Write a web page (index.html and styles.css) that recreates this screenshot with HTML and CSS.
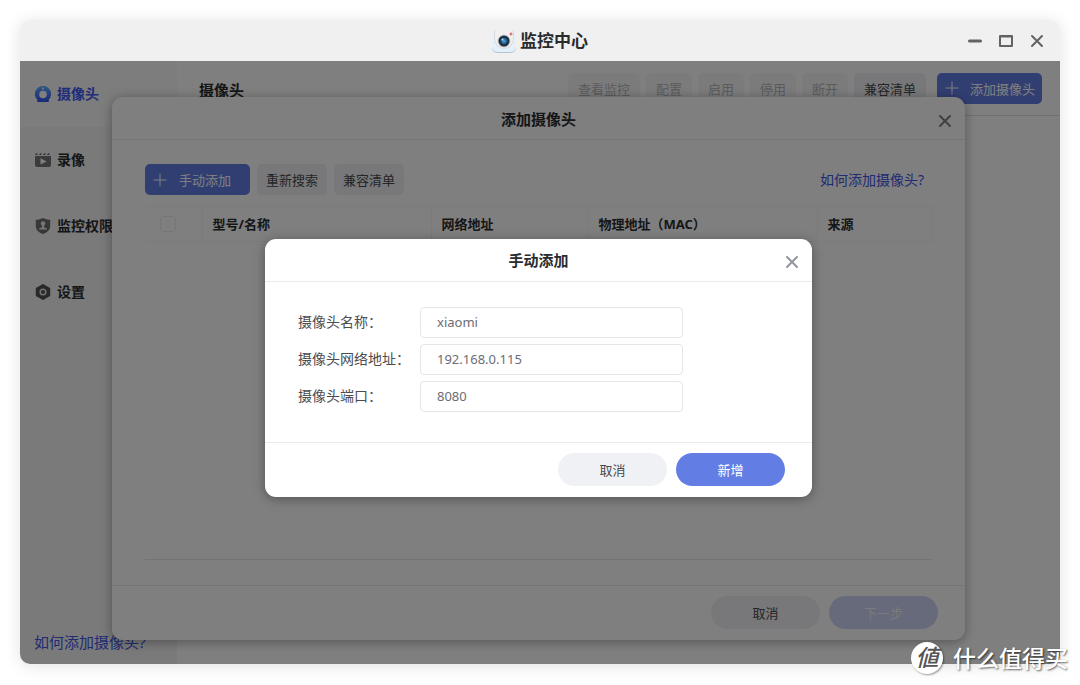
FILE: index.html
```html
<!DOCTYPE html>
<html lang="zh-CN">
<head>
<meta charset="utf-8">
<title>监控中心</title>
<link rel="stylesheet" href="styles.css">
</head>
<body>
<div class="window">
  <header class="titlebar">
    <div class="app-title">
      <svg class="app-icon" viewBox="0 0 24 24" aria-hidden="true">
        <defs>
          <linearGradient id="shell" x1="0" y1="0" x2="0" y2="1"><stop offset="0" stop-color="#f1f2f4"/><stop offset="1" stop-color="#e0effd"/></linearGradient>
          <radialGradient id="lens"><stop offset="0" stop-color="#5aa9dc"/><stop offset=".5" stop-color="#2368a3"/><stop offset="1" stop-color="#17202b"/></radialGradient>
        </defs>
        <rect x="0" y="2" width="24" height="22" rx="5" fill="#bcc2c9"/>
        <rect x="0" y="0" width="24" height="23" rx="5" fill="url(#shell)"/>
        <path d="M2 1h20v9a10 10 0 0 1-20 0z" fill="#d9dbdf"/>
        <path d="M3 1h18v9a9 9 0 0 1-18 0z" fill="#f0f0f1"/>
        <circle cx="12" cy="12" r="6.5" fill="#c9ccd1"/>
        <circle cx="12" cy="12" r="5.500" fill="#26313d"/>
        <circle cx="12" cy="12" r="4.500" fill="url(#lens)"/>
        <circle cx="10.500" cy="10.500" r="1" fill="#b7def5"/>
        <path d="M19 3.500v3M17.500 5h3" stroke="#e5494d" stroke-width="1"/>
      </svg>
      <h1 class="app-name">监控中心</h1>
    </div>
    <div class="window-controls">
      <button class="icon-button" type="button" aria-label="最小化"><svg viewBox="0 0 14 14"><path d="M1.500 7h11" stroke="#636363" stroke-width="3" stroke-linecap="round"/></svg></button>
      <button class="icon-button" type="button" aria-label="最大化"><svg viewBox="0 0 14 14"><path d="M1 2h12v10H1z" fill="none" stroke="#636363" stroke-width="2" stroke-linejoin="round"/><path d="M1 2.500h12" stroke="#636363" stroke-width="2"/></svg></button>
      <button class="icon-button" type="button" aria-label="关闭"><svg viewBox="0 0 14 14"><path d="M2 2l10 10M12 2L2 12" stroke="#636363" stroke-width="2" stroke-linecap="round"/></svg></button>
    </div>
  </header>

  <div class="workspace">
    <aside class="sidebar">
      <nav class="menu">
        <a class="menu-item menu-item-active" href="#cameras">
          <svg class="menu-icon" viewBox="0 0 16 16" aria-hidden="true"><defs><linearGradient id="cam" x1="0" y1="0" x2="0" y2="1"><stop offset="0" stop-color="#62b0ff"/><stop offset="1" stop-color="#3154ef"/></linearGradient></defs><path d="M8 0a8 8 0 0 1 5.800 13.500V16H2.200v-2.500A8 8 0 0 1 8 0z" fill="url(#cam)"/><circle cx="8" cy="8.500" r="3.800" fill="#fff"/><circle cx="8" cy="2.500" r="1" fill="#fff"/></svg>
          <span>摄像头</span>
        </a>
        <a class="menu-item" href="#recordings">
          <svg class="menu-icon" viewBox="0 0 16 16" aria-hidden="true"><path d="M0 3l1-1.500h2L2 3zM4 3l1-1.500h2L6 3zM8 3l1-1.500h2L10 3zM12 3l1-1.500h2L14 3z" fill="#5d5d5f"/><path d="M0 4h16v9a2 2 0 0 1-2 2H2a2 2 0 0 1-2-2z" fill="#77777a"/><path d="M5.500 6.200v6.400L11.500 9.400z" fill="#fff"/></svg>
          <span>录像</span>
        </a>
        <a class="menu-item" href="#permissions">
          <svg class="menu-icon" viewBox="0 0 16 16" aria-hidden="true"><path d="M8 0c2.500 1.200 4.600 1.700 7.200 1.800V8c0 4-3.200 6.800-7.200 8-4-1.200-7.200-4-7.200-8V1.800C3.400 1.700 5.500 1.200 8 0z" fill="#707073"/><circle cx="8" cy="5.500" r="2.200" fill="#eee"/><path d="M7 7h2v2.500c1.800.2 3 .8 3 2H4c0-1.200 1.200-1.800 3-2z" fill="#eee"/></svg>
          <span>监控权限</span>
        </a>
        <a class="menu-item" href="#settings">
          <svg class="menu-icon" viewBox="0 0 16 16" aria-hidden="true"><path d="M8 1l6.200 3.600v6.800L8 15l-6.200-3.600V4.600z" fill="#525255" stroke="#525255" stroke-width="2" stroke-linejoin="round"/><circle cx="8" cy="8" r="2.800" fill="none" stroke="#e4e4e4" stroke-width="1.500"/></svg>
          <span>设置</span>
        </a>
      </nav>
      <a class="help-link sidebar-help" href="#help">如何添加摄像头?</a>
    </aside>

    <main class="main">
      <div class="toolbar">
        <h2 class="page-title">摄像头</h2>
        <div class="button-row">
          <button class="button" type="button" disabled>查看监控</button>
          <button class="button" type="button" disabled>配置</button>
          <button class="button" type="button" disabled>启用</button>
          <button class="button" type="button" disabled>停用</button>
          <button class="button" type="button" disabled>断开</button>
          <button class="button" type="button">兼容清单</button>
        </div>
        <button class="button button-add" type="button"><svg class="plus" viewBox="0 0 14 14" aria-hidden="true"><path d="M7 1v12M1 7h12" stroke="#fff" stroke-width="1" stroke-linecap="round"/></svg><span class="add-label">添加摄像头</span></button>
      </div>
    </main>

    <section class="dialog search-dialog" role="dialog" aria-labelledby="search-title">
      <header class="dialog-header">
        <h2 class="dialog-title" id="search-title">添加摄像头</h2>
        <button class="icon-button dialog-close" type="button" aria-label="关闭"><svg viewBox="0 0 14 14"><path d="M2 2l10 10M12 2L2 12" stroke="#808389" stroke-width="2" stroke-linecap="round"/></svg></button>
      </header>
      <div class="search-body">
        <div class="search-tools">
          <button class="button button-add" type="button"><svg class="plus" viewBox="0 0 14 14" aria-hidden="true"><path d="M7 1v12M1 7h12" stroke="#fff" stroke-width="1" stroke-linecap="round"/></svg><span class="add-label">手动添加</span></button>
          <button class="button button-compact" type="button">重新搜索</button>
          <button class="button button-compact" type="button">兼容清单</button>
          <a class="help-link search-help" href="#help">如何添加摄像头?</a>
        </div>
        <div class="results">
          <table class="results-table">
            <colgroup><col class="col-check"><col class="col-name"><col class="col-address"><col class="col-mac"><col class="col-source"></colgroup>
            <thead>
              <tr>
                <th class="check-cell"><input class="check" type="checkbox" aria-label="全选"></th>
                <th>型号/名称</th>
                <th>网络地址</th>
                <th>物理地址（MAC）</th>
                <th>来源</th>
              </tr>
            </thead>
          </table>
        </div>
      </div>
      <footer class="dialog-footer">
        <button class="pill" type="button">取消</button>
        <button class="pill pill-primary" type="button" disabled>下一步</button>
      </footer>
    </section>

    <div class="backdrop">
      <form class="dialog manual-dialog" role="dialog" aria-labelledby="manual-title">
        <header class="dialog-header">
          <h2 class="dialog-title" id="manual-title">手动添加</h2>
          <button class="icon-button dialog-close" type="button" aria-label="关闭"><svg viewBox="0 0 14 14"><path d="M2 2l10 10M12 2L2 12" stroke="#92959d" stroke-width="2" stroke-linecap="round"/></svg></button>
        </header>
        <div class="fields">
          <label class="field-label" for="name">摄像头名称：</label>
          <input class="field" id="name" type="text" value="xiaomi">
          <label class="field-label" for="address">摄像头网络地址：</label>
          <input class="field" id="address" type="text" value="192.168.0.115">
          <label class="field-label" for="port">摄像头端口：</label>
          <input class="field" id="port" type="text" value="8080">
        </div>
        <footer class="dialog-footer">
          <button class="pill" type="button">取消</button>
          <button class="pill pill-primary" type="submit">新增</button>
        </footer>
      </form>
    </div>
  </div>
</div>
<div class="watermark"><span class="watermark-logo">値</span><span>什么值得买</span></div>
</body>
</html>
```
FILE: styles.css
```css
* { box-sizing: border-box; }

body {
  margin: 0;
  height: 100vh;
  padding: 20px 20px 21px;
  overflow: hidden;
  position: relative;
  background: #fff;
  color: #2b2c2e;
  font: 14px/20px "Noto Sans", "Noto Sans CJK SC", sans-serif;
}

h1, h2 { margin: 0; font-weight: 700; }
a { color: inherit; text-decoration: none; }
button, input { font-family: inherit; margin: 0; }
button { border: 0; white-space: nowrap; }

.window {
  height: 100%;
  display: flex;
  flex-direction: column;
  border-radius: 10px;
  overflow: hidden;
  box-shadow: 0 2px 16px rgba(0, 0, 0, .12);
}

.titlebar {
  height: 41px;
  flex: none;
  display: grid;
  grid-template-columns: 1fr auto 1fr;
  align-items: center;
  padding: 0 16px;
  background: #f0f0f0;
}
.app-title { grid-column: 2; display: flex; align-items: center; gap: 4px; }
.app-icon { width: 24px; height: 24px; }
.app-name { font-size: 17px; line-height: 24px; }
.window-controls { display: flex; justify-content: flex-end; gap: 17px; }

.icon-button { width: 14px; height: 14px; padding: 0; background: none; }
.icon-button svg { display: block; width: 14px; height: 14px; }

.workspace { flex: 1; min-height: 0; display: flex; position: relative; background: #fff; }

.sidebar {
  width: 157px;
  flex: none;
  display: flex;
  flex-direction: column;
  justify-content: space-between;
  background: #f4f4f4;
}
.menu-item {
  height: 66px;
  display: flex;
  align-items: center;
  gap: 6px;
  padding-left: 15px;
  font-weight: 700;
}
.menu-item-active { background: #fafafa; color: #4156f2; }
.menu-icon { width: 16px; height: 16px; }
.help-link { color: #4156e8; }
.sidebar-help { padding: 0 0 12px 14px; font-size: 15px; }

.main { flex: 1; min-width: 0; }
.toolbar {
  height: 55px;
  display: flex;
  align-items: center;
  gap: 11px;
  padding: 0 18px 0 22px;
  border-bottom: 1px solid #e2e2e4;
}
.page-title { flex: 1; font-size: 15px; padding-top: 4px; }
.button-row { display: flex; gap: 6px; }

.button {
  height: 31px;
  padding: 0 10px;
  border-radius: 5px;
  background: #f0f1f5;
  color: #4a4a4c;
  font-size: 13px;
}
.button:disabled { background: #f7f7f9; color: #b7b8bb; }
.button-compact { padding: 0 9px; }
.button-add {
  width: 105px;
  display: flex;
  align-items: center;
  padding: 0 7px 0 8px;
  background: #627de3;
  color: #fff;
}
.plus { width: 14px; height: 14px; flex: none; }
.add-label { flex: 1; text-align: center; }
.toolbar .button-add .add-label { text-align: right; }

.dialog {
  display: flex;
  flex-direction: column;
  border-radius: 11px;
  background: #fff;
  box-shadow: 0 2px 12px rgba(0, 0, 0, .35);
}
.dialog-header {
  height: 43px;
  flex: none;
  display: grid;
  grid-template-columns: 1fr auto 1fr;
  align-items: center;
  padding: 1px 13px 0;
  border-bottom: 1px solid #e9eaec;
}
.dialog-title { grid-column: 2; font-size: 15px; }
.dialog-close { justify-self: end; margin-top: 4px; }
.dialog-footer {
  height: 55px;
  flex: none;
  display: flex;
  justify-content: flex-end;
  align-items: center;
  gap: 9px;
  padding: 0 27px 1px 26px;
  border-top: 1px solid #e9eaec;
}
.pill {
  width: 109px;
  height: 33px;
  border-radius: 17px;
  background: #f0f1f5;
  color: #4a4a4c;
  font-size: 13px;
}
.pill-primary { background: #627de3; color: #fff; }
.pill-primary:disabled { background: #cfd5f5; color: #f4f4f6; }

.search-dialog { position: absolute; inset: 36px 95px 24px 92px; }
.search-body { flex: 1; display: flex; flex-direction: column; padding: 24px 33px 25px; }
.search-tools { display: flex; align-items: center; gap: 7px; }
.search-help { margin-left: auto; padding-right: 8px; }
.results { flex: 1; margin-top: 11px; border-bottom: 1px solid #e3e6ef; }
.results-table { width: 100%; table-layout: fixed; border-collapse: collapse; }
.results-table th {
  height: 35px;
  padding: 0 10px;
  border: 1px solid #f6f6f8;
  border-left: 0;
  text-align: left;
  font-size: 13px;
}
.col-check { width: 57px; }
.col-name, .col-mac { width: 229px; }
.col-address { width: 157px; }
.results-table .check-cell { padding: 0 0 0 15px; }
.check {
  display: block;
  width: 16px;
  height: 16px;
  appearance: none;
  border: 1px solid #ededf0;
  border-radius: 3px;
}

.backdrop {
  position: absolute;
  inset: 0;
  display: flex;
  justify-content: center;
  align-items: center;
  padding: 10px 3px 0 0;
  background: rgba(0, 0, 0, .5);
}
.manual-dialog { width: 547px; max-width: 90%; }
.fields {
  display: grid;
  grid-template-columns: 122px 263px;
  align-items: center;
  row-gap: 6px;
  padding: 25px 33px 30px;
}
.field-label { color: #4c4d50; }
.field {
  width: 100%;
  height: 31px;
  padding: 0 16px;
  border: 1px solid #e5e6eb;
  border-radius: 4px;
  background: #fff;
  color: #6b6d73;
  font-size: 13px;
}

.watermark {
  position: absolute;
  right: 12px;
  bottom: 11px;
  display: flex;
  align-items: center;
  gap: 10px;
  color: #fff;
  font-size: 23px;
  line-height: 32px;
  font-weight: 500;
  text-shadow: 1px 1px 2px rgba(0, 0, 0, .6);
}
.watermark-logo {
  width: 32px;
  height: 32px;
  border-radius: 50%;
  background: #fff;
  color: #555;
  box-shadow: 1px 1px 2px rgba(0, 0, 0, .4);
  text-align: center;
  text-shadow: none;
  font-style: italic;
  line-height: 30px;
}
```
